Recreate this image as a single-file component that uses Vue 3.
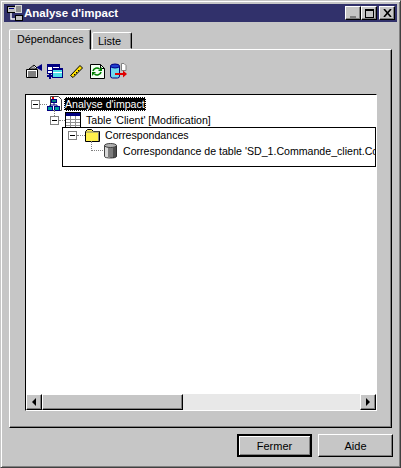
<template>
  <div class="window">
    <div class="titlebar">
      <svg class="app-icon" width="16" height="16" viewBox="0 0 16 16">
        <rect x="0.500" y="1.500" width="8" height="6" fill="#c0c0c0" stroke="#000" />
        <path d="M2 3.500h5" stroke="#000080" />
        <rect x="8.500" y="0.500" width="6" height="7" fill="#909090" stroke="#d8d8d8" />
        <path d="M4 8v6h5" fill="none" stroke="#fff" stroke-width="1.400" />
        <rect x="8.500" y="10.500" width="7" height="5" fill="#c0c0c0" stroke="#000" />
      </svg>
      <span class="title">Analyse d'impact</span>
      <div class="win-buttons">
        <button class="win-btn"><span class="min-mark"></span></button>
        <button class="win-btn"><span class="max-mark"></span></button>
        <button class="win-btn close">
          <svg width="9" height="8" viewBox="0 0 9 8"><path d="M1 0l7 8M8 0l-7 8" stroke="#000" stroke-width="1.600" fill="none" /></svg>
        </button>
      </div>
    </div>

    <div class="tabs">
      <div class="tab active">Dépendances</div>
      <div class="tab">Liste</div>
    </div>

    <div class="panel">
      <div class="toolbar">
        <svg width="16" height="14" viewBox="0 0 16 14">
          <path d="M0.500 5.500h11v8h-11z" fill="#fff" stroke="#000" />
          <path d="M2 8h8M2 10h8M2 12h8" stroke="#000" />
          <path d="M3 5l5-4 3 3-2 1z" fill="#fff" stroke="#000" />
          <path d="M5 4l3-2M6 5l3-2" stroke="#606060" />
          <path d="M11 3l5-3v7l-5-3z" fill="#000080" />
        </svg>
        <svg width="16" height="15" viewBox="0 0 16 15">
          <rect x="0.500" y="0.500" width="12" height="9" fill="#fff" stroke="#000080" />
          <rect x="0" y="0" width="13" height="3" fill="#000080" />
          <path d="M1 6.500h11M5.500 3v7" stroke="#000080" />
          <rect x="5.500" y="4.500" width="10" height="9" fill="#50e0e8" stroke="#000080" />
          <rect x="5" y="4" width="11" height="2" fill="#000080" />
          <path d="M6 8.500h9" stroke="#fff" />
          <path d="M3 9v6M0 12h6" stroke="#000080" stroke-width="2" />
        </svg>
        <svg width="13" height="13" viewBox="0 0 13 13">
          <path d="M0.500 10.500L10 0.500l2.500 2.500L3 12.500z" fill="#ffe000" stroke="#000" />
          <path d="M4 9l1 1M6 7l1 1M8 5l1 1" stroke="#000" />
        </svg>
        <svg width="15" height="15" viewBox="0 0 15 15">
          <path d="M0.500 0.500h10l4 4v10h-14z" fill="#f4fff4" stroke="#000" />
          <path d="M10.500 0.500v4h4" fill="none" stroke="#000" />
          <path d="M3 7a4 4 0 0 1 6.500-2M11 8a4 4 0 0 1-6.500 2" fill="none" stroke="#008000" stroke-width="1.600" />
          <path d="M8 7h4V3zM6 8H2v4z" fill="#008000" />
        </svg>
        <svg width="17" height="16" viewBox="0 0 17 16">
          <rect x="0.500" y="2" width="9" height="13" rx="2" fill="#70d8ee" stroke="#000080" />
          <ellipse cx="5" cy="3" rx="4.500" ry="2" fill="#2040d0" stroke="#000080" />
          <path d="M11.500 0.500h2.500l2 2v5h-4.500z" fill="#fff" stroke="#808080" />
          <path d="M5 11h9" stroke="#e00000" stroke-width="2" />
          <path d="M13 7.500l4 3.500-4 3.500z" fill="#e00000" />
        </svg>
      </div>

      <div class="tree-box">
        <div class="tree">
          <div class="row level-0">
            <span class="expander"></span>
            <span class="dots-h"></span>
            <svg class="node-icon" width="16" height="16" viewBox="0 0 16 16">
              <path d="M3.500 0.500h8l3 3v11h-11z" fill="#fff" stroke="#404040" />
              <rect x="4.500" y="3.500" width="5" height="3" fill="#008080" stroke="#000080" />
              <rect x="0.500" y="10.500" width="5" height="4" fill="#00a0a0" stroke="#000080" />
              <rect x="7.500" y="10.500" width="5" height="4" fill="#00a0a0" stroke="#000080" />
              <path d="M7 7v2M3 11V9h7v2" fill="none" stroke="#000080" />
              <path d="M5 1h2v2H5z" fill="#e00000" />
            </svg>
            <span class="label selected">Analyse d'impact</span>
          </div>
          <div class="row level-1">
            <span class="expander"></span>
            <span class="dots-h"></span>
            <svg class="node-icon" width="16" height="16" viewBox="0 0 16 16">
              <rect x="0.500" y="0.500" width="15" height="15" fill="#fff" stroke="#000" />
              <rect x="1" y="1" width="14" height="3" fill="#000080" />
              <path d="M1 7.500h14M1 10.500h14M1 13.500h14M5.500 4v11M10.500 4v11" stroke="#909090" />
            </svg>
            <span class="label">Table 'Client' [Modification]</span>
          </div>
          <div class="group">
            <div class="row level-2">
              <span class="expander"></span>
              <span class="dots-h"></span>
              <svg class="node-icon" width="15" height="13" viewBox="0 0 15 13">
                <path d="M0.500 2.500l2-2h4l2 2h6v10h-14z" fill="#fff04c" stroke="#000" />
                <path d="M1 3h13" stroke="#808080" />
                <path d="M13.500 3.500v8.500" stroke="#808080" />
              </svg>
              <span class="label">Correspondances</span>
            </div>
            <div class="row level-3">
              <span class="elbow"></span>
              <svg class="node-icon" width="13" height="16" viewBox="0 0 13 16">
                <path d="M0.500 2.500v11c0 2 12 2 12 0v-11z" fill="#d8d8d8" stroke="#404040" />
                <path d="M5 4v10M7 4v11M9 3v12M11 3v11M10 3v12M12 3v11" stroke="#202020" />
                <ellipse cx="6.500" cy="2.500" rx="6" ry="2" fill="#b0b0b0" stroke="#404040" />
              </svg>
              <span class="label clip">Correspondance de table 'SD_1.Commande_client.Commande'</span>
            </div>
          </div>
        </div>
        <div class="hscroll">
          <button class="scroll-btn"><span class="arrow left"></span></button>
          <div class="track"><div class="thumb"></div></div>
          <button class="scroll-btn"><span class="arrow right"></span></button>
        </div>
      </div>
    </div>

    <div class="footer">
      <button class="push default">Fermer</button>
      <button class="push">Aide</button>
    </div>
  </div>
</template>

<script setup>
</script>

<style>
html, body {
  margin: 0;
  background: #c6c6c6;
}
</style>

<style scoped>
.window {
  box-sizing: border-box;
  width: 401px;
  height: 468px;
  padding: 3px;
  background: #c6c6c6;
  border: 1px solid;
  border-color: #c6c6c6 #404040 #404040 #c6c6c6;
  box-shadow: inset 1px 1px 0 #fff, inset -1px -1px 0 #808080;
  font-family: "Liberation Sans", Arial, sans-serif;
  font-size: 11px;
  color: #000;
  display: flex;
  flex-direction: column;
}

.titlebar {
  height: 18px;
  flex: none;
  background: #31316b;
  display: flex;
  align-items: center;
  padding: 0 2px 0 3px;
  gap: 1px;
}

.title {
  color: #fff;
  font-weight: 700;
  font-size: 11.5px;
}

.win-buttons {
  margin-left: auto;
  display: flex;
}

.win-btn {
  width: 16px;
  height: 14px;
  padding: 0;
  background: #c6c6c6;
  border: 1px solid;
  border-color: #fff #000 #000 #fff;
  box-shadow: inset -1px -1px 0 #808080;
  display: flex;
  align-items: center;
  justify-content: center;
}

.win-btn.close {
  margin-left: 2px;
}

.min-mark {
  width: 6px;
  height: 2px;
  background: #808080;
  align-self: flex-end;
  margin-bottom: 1px;
}

.max-mark {
  width: 7px;
  height: 6px;
  border: 1px solid #000;
  border-top-width: 2px;
}

.tabs {
  display: flex;
  align-items: flex-end;
  height: 27px;
  margin-left: 5px;
  flex: none;
}

.tab {
  box-sizing: border-box;
  height: 17px;
  width: 40px;
  padding: 2px 0 0 5px;
  margin-left: 1px;
  background: #c6c6c6;
  border: 1px solid;
  border-color: #fff #000 transparent #fff;
  border-radius: 2px 2px 0 0;
  box-shadow: inset -1px 0 0 #808080;
}

.tab.active {
  height: 21px;
  width: 82px;
  margin-left: 0;
  padding: 3px 0 0 7px;
  margin-bottom: -1px;
  position: relative;
  z-index: 1;
  font-size: 10.8px;
}

.panel {
  flex: none;
  width: 383px;
  height: 379px;
  box-sizing: border-box;
  margin-left: 5px;
  border: 1px solid;
  border-color: #fff #000 #000 #fff;
  box-shadow: inset -1px -1px 0 #808080;
  padding: 12px 14px 0 15px;
  display: flex;
  flex-direction: column;
}

.toolbar {
  display: flex;
  align-items: center;
  gap: 5px;
  height: 18px;
  padding-left: 1px;
}

.toolbar svg:nth-child(3) {
  margin: 0 2px;
}

.tree-box {
  margin-top: 14px;
  width: 352px;
  height: 317px;
  box-sizing: border-box;
  background: #fff;
  border: 1px solid;
  border-color: #000 #fff #fff #000;
  display: flex;
  flex-direction: column;
}

.tree {
  flex: 1;
  padding-top: 1px;
  overflow: hidden;
  font-size: 10.6px;
}

.row {
  height: 16px;
  display: flex;
  align-items: center;
  white-space: nowrap;
}

.level-0 { padding-left: 5px; }
.level-1 { padding-left: 24px; }

.expander {
  box-sizing: border-box;
  width: 9px;
  height: 9px;
  border: 1px solid #808080;
  flex: none;
  position: relative;
}

.expander::after {
  content: "";
  position: absolute;
  left: 1px;
  top: 3px;
  width: 5px;
  height: 1px;
  background: #000;
}

.level-1 .expander::before {
  content: "";
  position: absolute;
  left: 3px;
  top: -7px;
  height: 6px;
  border-left: 1px dotted #808080;
}

.dots-h {
  width: 7px;
  flex: none;
  border-top: 1px dotted #808080;
}

.level-1 .dots-h {
  width: 6px;
}

.node-icon {
  flex: none;
}

.label {
  padding: 0 1px;
  line-height: 14px;
}

.level-0 .label {
  margin-left: 1px;
}

.level-1 .label {
  margin-left: 4px;
}

.level-2 .label {
  margin-left: 4px;
}

.level-3 .label {
  margin-left: 5px;
}

.selected {
  background: #000;
  color: #fff;
  outline: 1px dotted #fff;
  outline-offset: -1px;
}

.group {
  box-sizing: border-box;
  margin: -1px 0 0 36px;
  height: 40px;
  border: 1px solid #000;
  overflow: hidden;
}

.level-2 {
  padding-left: 5px;
  height: 14px;
}

.level-2 .dots-h {
  width: 8px;
}

.level-3 {
  padding-left: 28px;
  height: 18px;
}

.elbow {
  width: 12px;
  height: 10px;
  margin-top: -10px;
  margin-right: 1px;
  flex: none;
  border-left: 1px dotted #808080;
  border-bottom: 1px dotted #808080;
  box-sizing: border-box;
}

.hscroll {
  height: 16px;
  flex: none;
  display: flex;
  background: #e8e8e8;
}

.scroll-btn {
  width: 16px;
  height: 16px;
  padding: 0;
  flex: none;
  background: #c6c6c6;
  border: 1px solid;
  border-color: #fff #000 #000 #fff;
  box-shadow: inset -1px -1px 0 #808080;
  display: flex;
  align-items: center;
  justify-content: center;
}

.arrow {
  width: 0;
  height: 0;
  border-top: 4px solid transparent;
  border-bottom: 4px solid transparent;
}

.arrow.left { border-right: 4px solid #000; }
.arrow.right { border-left: 4px solid #000; }

.track {
  flex: 1;
}

.thumb {
  box-sizing: border-box;
  width: 141px;
  height: 16px;
  background: #c6c6c6;
  border: 1px solid;
  border-color: #fff #000 #000 #fff;
  box-shadow: inset -1px -1px 0 #808080;
}

.footer {
  flex: 1;
  display: flex;
  justify-content: flex-end;
  gap: 6px;
  padding: 6px 4px 0 0;
}

.push {
  box-sizing: border-box;
  width: 75px;
  height: 23px;
  padding: 0;
  background: #c6c6c6;
  font: inherit;
  color: #000;
  border: 1px solid;
  border-color: #fff #000 #000 #fff;
  box-shadow: inset -1px -1px 0 #808080;
}

.push.default {
  outline: 1px solid #000;
  outline-offset: -1px;
  border-width: 2px;
  border-color: #000;
  box-shadow: inset 1px 1px 0 #fff, inset -1px -1px 0 #808080;
}
</style>
